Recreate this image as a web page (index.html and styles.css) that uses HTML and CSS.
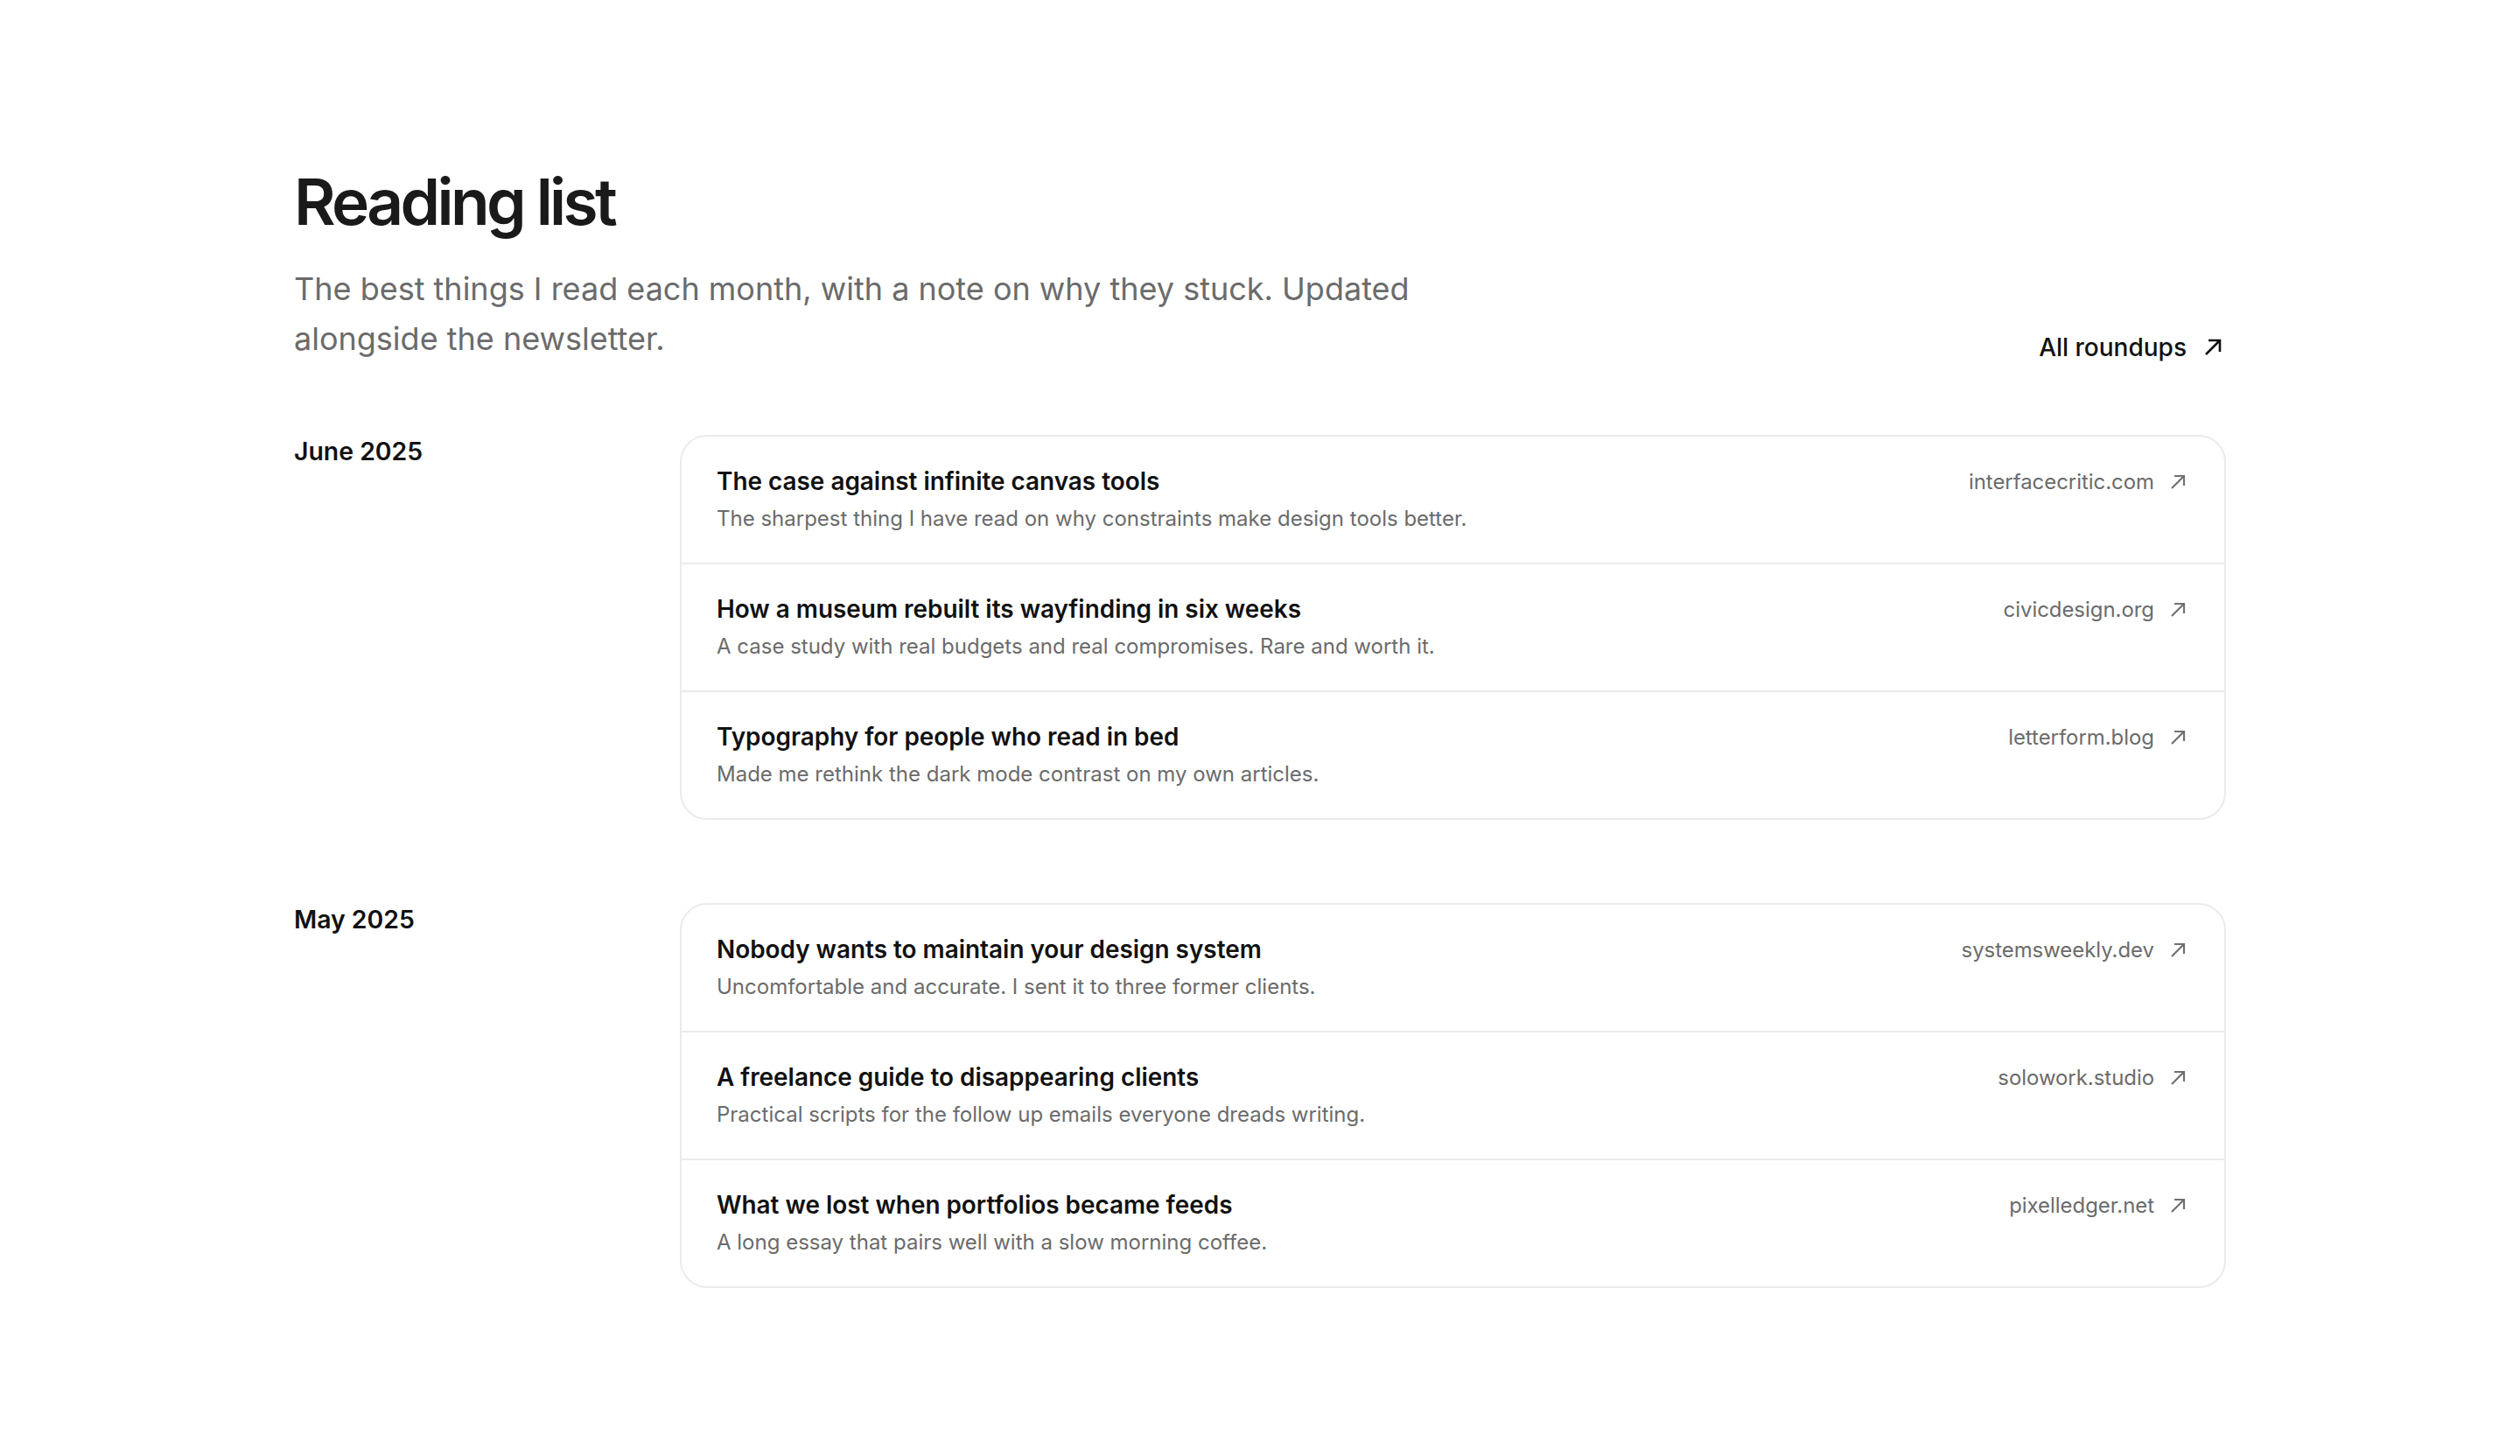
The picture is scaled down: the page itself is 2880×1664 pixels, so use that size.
FILE: index.html
```html
<!DOCTYPE html>
<html lang="en">
<head>
    <meta charset="UTF-8">
    <meta name="viewport" content="width=device-width, initial-scale=1.0">
    <title>Reading list</title>
    <link rel="stylesheet" href="styles.css">
</head>
<body>
    <main class="page">
        <header class="intro">
            <div class="intro-text">
                <h1>Reading list</h1>
                <p>The best things I read each month, with a note on why they stuck. Updated alongside the newsletter.</p>
            </div>
            <a class="all-link" href="#">All roundups
                <svg viewBox="0 0 24 24" aria-hidden="true"><path d="M4 20 L20 4 M7 4 H20 V17"/></svg>
            </a>
        </header>

        <section class="month">
            <h2>June 2025</h2>
            <ul class="card">
                <li class="item">
                    <div class="item-text">
                        <h3>The case against infinite canvas tools</h3>
                        <p>The sharpest thing I have read on why constraints make design tools better.</p>
                    </div>
                    <a class="source" href="#">interfacecritic.com
                        <svg viewBox="0 0 24 24" aria-hidden="true"><path d="M4 19 L18 5 M7 5 H18 V16"/></svg>
                    </a>
                </li>
                <li class="item">
                    <div class="item-text">
                        <h3>How a museum rebuilt its wayfinding in six weeks</h3>
                        <p>A case study with real budgets and real compromises. Rare and worth it.</p>
                    </div>
                    <a class="source" href="#">civicdesign.org
                        <svg viewBox="0 0 24 24" aria-hidden="true"><path d="M4 19 L18 5 M7 5 H18 V16"/></svg>
                    </a>
                </li>
                <li class="item">
                    <div class="item-text">
                        <h3>Typography for people who read in bed</h3>
                        <p>Made me rethink the dark mode contrast on my own articles.</p>
                    </div>
                    <a class="source" href="#">letterform.blog
                        <svg viewBox="0 0 24 24" aria-hidden="true"><path d="M4 19 L18 5 M7 5 H18 V16"/></svg>
                    </a>
                </li>
            </ul>
        </section>

        <section class="month">
            <h2>May 2025</h2>
            <ul class="card">
                <li class="item">
                    <div class="item-text">
                        <h3>Nobody wants to maintain your design system</h3>
                        <p>Uncomfortable and accurate. I sent it to three former clients.</p>
                    </div>
                    <a class="source" href="#">systemsweekly.dev
                        <svg viewBox="0 0 24 24" aria-hidden="true"><path d="M4 19 L18 5 M7 5 H18 V16"/></svg>
                    </a>
                </li>
                <li class="item">
                    <div class="item-text">
                        <h3>A freelance guide to disappearing clients</h3>
                        <p>Practical scripts for the follow up emails everyone dreads writing.</p>
                    </div>
                    <a class="source" href="#">solowork.studio
                        <svg viewBox="0 0 24 24" aria-hidden="true"><path d="M4 19 L18 5 M7 5 H18 V16"/></svg>
                    </a>
                </li>
                <li class="item">
                    <div class="item-text">
                        <h3>What we lost when portfolios became feeds</h3>
                        <p>A long essay that pairs well with a slow morning coffee.</p>
                    </div>
                    <a class="source" href="#">pixelledger.net
                        <svg viewBox="0 0 24 24" aria-hidden="true"><path d="M4 19 L18 5 M7 5 H18 V16"/></svg>
                    </a>
                </li>
            </ul>
        </section>
    </main>
</body>
</html>
```

FILE: styles.css
```css
body {
    margin: 0;
    padding: 0;
    background-color: #fff;
    color: #111;
    font-family: Inter, "Noto Sans", sans-serif;
}

.page {
    max-width: 2208px;
    margin: 0 auto;
    padding: 191px 0 160px;
}

/* header */

.intro {
    display: flex;
    justify-content: space-between;
    align-items: flex-end;
    margin-bottom: 81px;
}

.intro h1 {
    margin: 0;
    font-size: 73px;
    line-height: 1.1;
    font-weight: 600;
    letter-spacing: -0.05em;
    color: #1a1a1a;
}

.intro p {
    margin: 31px 0 0;
    max-width: 1300px;
    font-size: 36px;
    line-height: 1.58;
    color: #6b6b6b;
}

.all-link {
    display: flex;
    align-items: center;
    gap: 18px;
    padding-right: 3px;
    font-size: 28px;
    line-height: 38px;
    font-weight: 500;
    color: #111;
    text-decoration: none;
}

.all-link svg {
    width: 24px;
    height: 24px;
    fill: none;
    stroke: #111;
    stroke-width: 2.6;
}

/* months */

.month {
    display: grid;
    grid-template-columns: 367px 1fr;
    column-gap: 74px;
    align-items: start;
}

.month + .month {
    margin-top: 95px;
}

.month h2 {
    margin: 0;
    font-size: 28.4px;
    line-height: 38px;
    font-weight: 600;
    color: #111;
}

.card {
    list-style: none;
    margin: 0;
    padding: 0;
    border: 2px solid #ebebeb;
    border-radius: 31px;
    overflow: hidden;
}

.item {
    display: flex;
    justify-content: space-between;
    align-items: flex-start;
    gap: 40px;
    padding: 33px 40px 32px;
}

.item + .item {
    border-top: 2px solid #ebebeb;
}

.item h3 {
    margin: 0;
    font-size: 27.9px;
    line-height: 36px;
    font-weight: 600;
    color: #111;
}

.item p {
    margin: 7px 0 0;
    font-size: 24px;
    line-height: 36px;
    color: #6b6b6b;
}

.source {
    display: flex;
    align-items: center;
    gap: 16px;
    flex-shrink: 0;
    font-size: 23.9px;
    line-height: 38px;
    color: #6b6b6b;
    text-decoration: none;
}

.source svg {
    width: 24px;
    height: 24px;
    fill: none;
    stroke: #707070;
    stroke-width: 2.2;
}
```
